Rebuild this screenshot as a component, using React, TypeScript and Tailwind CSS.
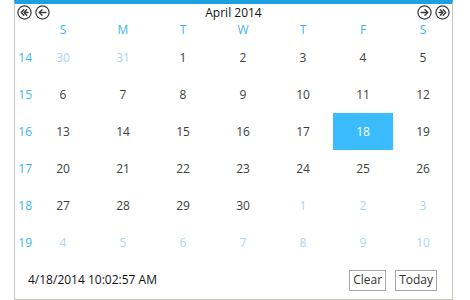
import React from "react";

const weeks = [
  { wk: 14, days: [30, 31, 1, 2, 3, 4, 5], out: [0, 1] },
  { wk: 15, days: [6, 7, 8, 9, 10, 11, 12], out: [] },
  { wk: 16, days: [13, 14, 15, 16, 17, 18, 19], out: [] },
  { wk: 17, days: [20, 21, 22, 23, 24, 25, 26], out: [] },
  { wk: 18, days: [27, 28, 29, 30, 1, 2, 3], out: [4, 5, 6] },
  { wk: 19, days: [4, 5, 6, 7, 8, 9, 10], out: [0, 1, 2, 3, 4, 5, 6] },
];

const dayNames = ["S", "M", "T", "W", "T", "F", "S"];

function NavIcon({ dir, double }: { dir: "left" | "right"; double?: boolean }) {
  const flip = dir === "right" ? "scale(-1,1) translate(-15,0)" : undefined;
  return (
    <svg width="15" height="15" viewBox="0 0 15 15" className="block">
      <circle cx="7.5" cy="7.5" r="6.6" fill="none" stroke="#3a3a3a" strokeWidth="1.2" />
      <g transform={flip} fill="none" stroke="#3a3a3a" strokeWidth="1.4" strokeLinecap="round" strokeLinejoin="round">
        {double ? (
          <>
            <path d="M6.8 4.8 L4.2 7.5 L6.8 10.2" />
            <path d="M9.6 4.8 L7 7.5 L9.6 10.2" />
            <path d="M7.5 7.5 L11 7.5" />
          </>
        ) : (
          <>
            <path d="M7 4.8 L4.3 7.5 L7 10.2" />
            <path d="M4.5 7.5 L10.8 7.5" />
          </>
        )}
      </g>
    </svg>
  );
}

export default function App() {
  return (
    <div className="w-[470px] h-[300px] bg-white" style={{ fontFamily: '"Open Sans", "Noto Sans", sans-serif' }}>
      <div className="ml-[14px] w-[439px] h-[300px] border-x border-b border-[#c6c6bc] border-t-4 border-t-[#1ba1e2] flex flex-col">
        <div className="flex items-center h-[17px] px-[2px]">
          <div className="flex gap-[3px]">
            <NavIcon dir="left" double />
            <NavIcon dir="left" />
          </div>
          <div className="flex-1 text-center text-[12px] text-[#111] leading-none">April 2014</div>
          <div className="flex gap-[3px]">
            <NavIcon dir="right" />
            <NavIcon dir="right" double />
          </div>
        </div>
        <div className="grid grid-cols-[18px_repeat(7,60px)] h-[18px] items-center text-[12px] text-[#3db6f2]">
          <div />
          {dayNames.map((d, i) => (
            <div key={i} className="text-center">{d}</div>
          ))}
        </div>
        {weeks.map((w) => (
          <div key={w.wk} className="grid grid-cols-[18px_repeat(7,60px)] h-[37px] items-center text-[12px]">
            <div className="text-right text-[#3db6f2] pr-[1px]">{w.wk}</div>
            {w.days.map((d, i) => {
              const out = w.out.includes(i);
              const sel = w.wk === 16 && d === 18;
              return (
                <div
                  key={i}
                  className={
                    "h-[37px] flex items-center justify-center " +
                    (sel ? "bg-[#3bbcff] text-white" : out ? "text-[#a9d7ef]" : "text-[#404040]")
                  }
                >
                  {d}
                </div>
              );
            })}
          </div>
        ))}
        <div className="flex items-center flex-1 pl-[13px] pr-[15px]">
          <div className="flex-1 text-[12px] text-[#111]">4/18/2014 10:02:57 AM</div>
          <button className="h-[21px] px-[3px] border border-[#a8a8a8] text-[12px] text-[#333] leading-none">Clear</button>
          <button className="ml-[9px] h-[21px] px-[3px] border border-[#a8a8a8] text-[12px] text-[#333] leading-none">Today</button>
        </div>
      </div>
    </div>
  );
}
